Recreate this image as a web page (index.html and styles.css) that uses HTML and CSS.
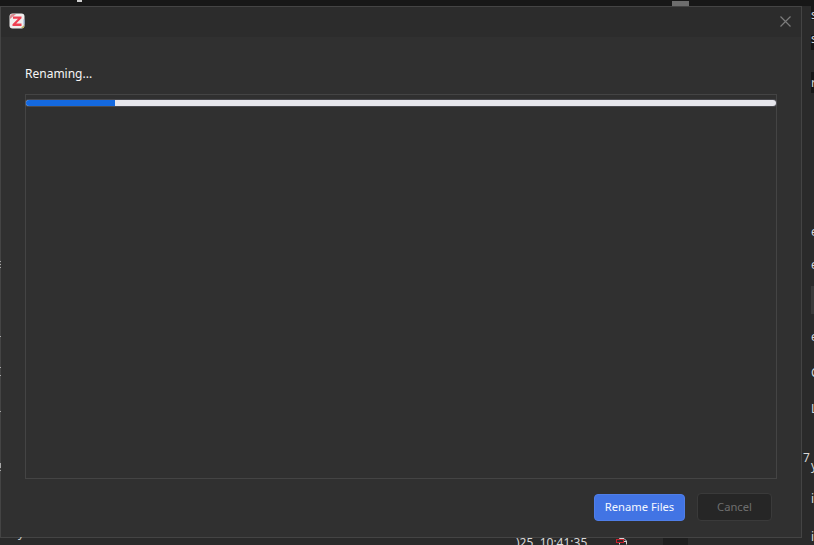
FILE: index.html
```html
<!DOCTYPE html>
<html lang="en">
<head>
<meta charset="utf-8">
<title>Renaming</title>
<link rel="stylesheet" href="styles.css">
</head>
<body>
<div class="backdrop">
  <div class="top-strip"><span class="tick"></span><span class="thumb"></span></div>
  <div class="behind behind-right">
    <span class="band b1"></span><span class="band b2"></span><span class="band b3"></span>
    <span class="peek p1">s</span><span class="peek p2">s</span><span class="peek p12">r</span><span class="peek p3">e</span><span class="peek p4">e</span><span class="peek p5">e</span><span class="peek p6">C</span><span class="peek p7">L</span><span class="peek p8">7</span><span class="peek p9">y</span><span class="peek p10">i</span><span class="peek p11">i</span>
    <span class="dark-box"></span>
  </div>
  <div class="behind behind-bottom">
    <span class="under-dark"></span>
    <span class="under-time">)25, 10:41:35</span>
    <svg class="under-icon" viewBox="0 0 14 8" width="14" height="8" aria-hidden="true"><path d="M4.500 7.500V1.500h4.500l2.500 2.500v3.500" fill="none" stroke="#d4d4d4"/><path d="M8.500 1.500v3h3" fill="none" stroke="#d4d4d4"/><rect x="1.500" y="2.500" width="7" height="3" fill="#2a2a2a" stroke="#c8202c"/></svg>
  </div>
</div>
<main class="dialog">
  <header class="titlebar">
    <svg class="logo" viewBox="0 0 16 16" width="16" height="16" aria-hidden="true">
      <rect x="0.500" y="0.500" width="15" height="15" rx="3" fill="#f0eeee"/>
      <path d="M1 4a3 3 0 0 1 3-3h3L1 6z" fill="#d98a90"/>
      <path d="M14.500 6v6l1-1V7z" fill="#8fb0dc"/>
      <path d="M4 3.500h8.500v1.800L7.200 10.400h5.300V13H3.500v-1.800L9 5.800H4z" fill="#ef4052"/>
      <path d="M12 15l3-3v3z" fill="#b9b26a"/>
    </svg>
    <svg class="close" viewBox="0 0 11 11" width="11" height="11" aria-hidden="true"><path d="M.5.500l10 10M10.500.500l-10 10" stroke="#7c7c7c" stroke-width="1.200" fill="none"/></svg>
  </header>
  <section class="content">
    <div class="status">Renaming...</div>
    <div class="panel">
      <div class="progress"><div class="progress-fill"></div></div>
    </div>
    <footer class="actions">
      <button class="btn btn-primary" type="button">Rename Files</button>
      <button class="btn btn-disabled" type="button">Cancel</button>
    </footer>
  </section>
</main>
<div class="bleed">
  <span class="under-text">ally authors metadata for PDFs and ebooks</span>
</div>
<svg class="edge-marks" viewBox="0 0 1 545" width="1" height="545" aria-hidden="true">
  <g fill="#a8a8a8"><rect y="261" width="1" height="1"/><rect y="264" width="1" height="1"/><rect y="267" width="1" height="1"/><rect y="336" width="1" height="1"/><rect y="367" width="1" height="1"/><rect y="375" width="1" height="1"/><rect y="411" width="1" height="1"/><rect y="463" width="1" height="5"/><rect y="470" width="1" height="1"/></g>
</svg>
</body>
</html>
```
FILE: styles.css
```css
* { box-sizing: border-box; }
html, body { margin: 0; height: 100%; }
body {
  width: 814px;
  height: 545px;
  overflow: hidden;
  position: relative;
  background: #2a2a2a;
  font-family: "Noto Sans", "Open Sans", sans-serif;
}
.backdrop { position: absolute; inset: 0; overflow: hidden; }
.top-strip { height: 6px; background: #171717; position: relative; }
.tick { position: absolute; left: 77px; top: 0; width: 5px; height: 2px; background: #cfcfcf; }
.thumb { position: absolute; left: 672px; top: 1px; width: 17px; height: 5px; background: #6d6d6d; }
.behind { position: absolute; color: #d8d8d8; font-size: 12px; }
.behind-right { left: 802px; top: 0; width: 12px; height: 545px; overflow: hidden; }
.band { position: absolute; left: 9px; width: 3px; background: #171717; }
.b1 { top: 0; height: 20px; }
.b2 { top: 35px; height: 15px; }
.b3 { top: 72px; height: 21px; }
.peek { position: absolute; left: 9px; line-height: 14px; }
.p1 { top: 8px; } .p2 { top: 32px; } .p12 { top: 76px; } .p3 { top: 225px; } .p4 { top: 258px; }
.p5 { top: 330px; } .p6 { top: 366px; } .p7 { top: 402px; }
.p8 { top: 451px; left: 1px; } .p9 { top: 459px; } .p10 { top: 492px; } .p11 { top: 530px; }
.dark-box { position: absolute; left: 9px; top: 286px; width: 3px; height: 28px; background: #3a3a3a; }
.behind-bottom { left: 0; top: 537px; width: 802px; height: 8px; overflow: hidden; }
.under-time { position: absolute; left: 516px; top: -2px; font-size: 12px; line-height: 16px; white-space: nowrap; }
.under-icon { position: absolute; left: 615px; top: 0; }
.under-dark { position: absolute; left: 663px; top: 0; width: 25px; height: 8px; background: #1e1e1e; }

.dialog {
  position: absolute;
  left: 0;
  top: 6px;
  width: 802px;
  height: 532px;
  background: #303030;
  border: 1px solid #444;
  display: flex;
  flex-direction: column;
}
.titlebar {
  height: 30px;
  flex: none;
  background: #2c2c2c;
  display: flex;
  align-items: center;
  justify-content: space-between;
  padding: 0 10px 2px 8px;
}
.logo, .close { display: block; }
.content {
  flex: 1;
  min-height: 0;
  display: flex;
  flex-direction: column;
  padding: 27px 24px 16px;
}
.status {
  color: #f6f6f6;
  font-size: 12px;
  line-height: 20px;
  height: 20px;
}
.panel {
  margin-top: 10px;
  flex: 1;
  min-height: 0;
  border: 1px solid #444;
  padding: 5px 0 0;
}
.progress {
  height: 6px;
  background: #e6e6ec;
  border-radius: 3px;
  overflow: hidden;
  box-shadow: 0 0 0 1px rgba(150,150,170,.25);
}
.progress-fill { width: 89px; height: 100%; background: #1469e0; }
.actions {
  flex: none;
  display: flex;
  justify-content: flex-end;
  align-items: center;
  gap: 12px;
  margin-top: 14px;
  padding-right: 5px;
}
.btn {
  border-radius: 4px;
  font-family: inherit;
  font-size: 11.2px;
  padding: 0 0 2px;
}
.btn-primary { width: 91px; height: 27px; background: #4274e4; border: 1px solid #4f7ee8; color: #f5f8ff; }
.btn-disabled { width: 75px; height: 28px; background: #262626; border: 1px solid #3a3a3a; color: #6e6e6e; }

.bleed { position: absolute; left: 0; top: 537px; width: 802px; height: 4px; overflow: hidden; }
.under-text { position: absolute; left: 5px; top: -12px; font-size: 12px; line-height: 16px; white-space: nowrap; color: #c8c8c8; }
.edge-marks { position: absolute; left: 0; top: 0; }
```
